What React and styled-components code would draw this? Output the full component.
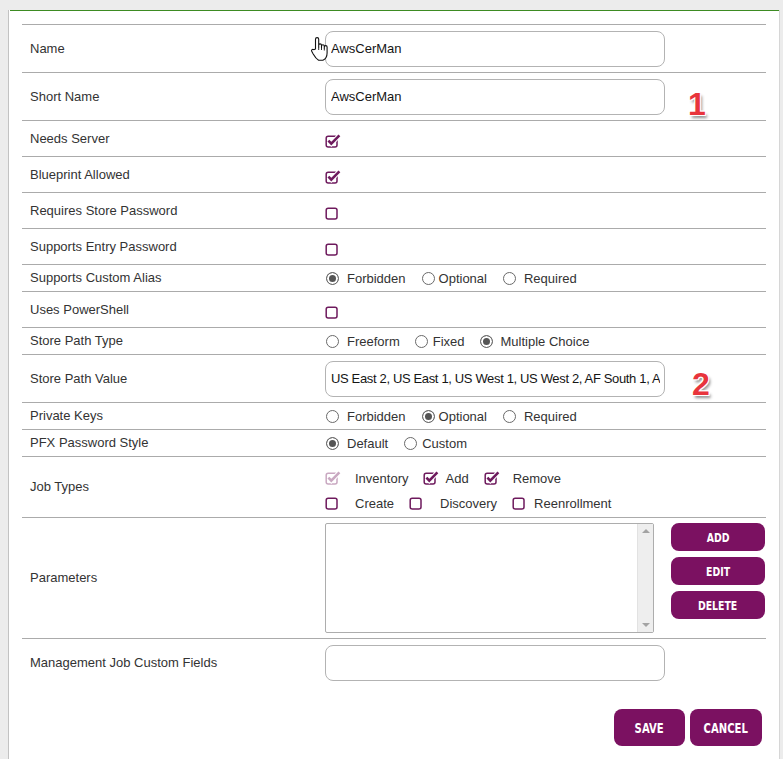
import React from 'react';
import styled, { createGlobalStyle } from 'styled-components';

const GlobalStyle = createGlobalStyle`
  html, body {
    margin: 0;
    padding: 0;
    background: #ececec;
  }
  body {
    font-family: "Liberation Sans", Arial, sans-serif;
    font-size: 13px;
    color: #333;
  }
`;

const Page = styled.div`
  box-sizing: border-box;
  min-height: 759px;
  padding: 9px 3px 0 8px;
`;

const Panel = styled.div`
  box-sizing: border-box;
  min-height: 750px;
  background: #fff;
  border-left: 1px solid #c2c2c2;
  border-right: 1px solid #d6d6d6;
  padding-bottom: 12px;
`;

const GreenLine = styled.div`
  height: 1px;
  margin: 1px 0 0 1px;
  background: #3d8b22;
`;

const Form = styled.div`
  width: 744px;
  margin: 13px 0 0 13px;
`;

const Row = styled.div`
  position: relative;
  display: grid;
  grid-template-columns: 303px 1fr;
  align-items: center;
  box-sizing: border-box;
  height: ${p => p.$h}px;
  border-top: 1px solid #ababab;
`;

const Label = styled.div`
  padding-left: 8px;
  margin-top: -1px;
  font-size: 13px;
  color: #333;
  white-space: nowrap;
`;

const Value = styled.div`
  display: flex;
  align-items: center;
  align-self: ${p => (p.$top ? 'start' : 'center')};
  padding-top: ${p => p.$pt || 0}px;
`;

const InputWrap = styled.div`
  position: relative;
`;

const TextInput = styled.input`
  box-sizing: border-box;
  width: 340px;
  height: 36px;
  padding: 0 4px 0 5px;
  border: 1px solid #b3b3b3;
  border-radius: 8px;
  background: #fff;
  font-family: "Liberation Sans", Arial, sans-serif;
  font-size: 13px;
  letter-spacing: ${p => (p.$tight ? '-0.35px' : 'normal')};
  color: #151515;
  outline: none;
`;

const Cursor = styled.svg`
  position: absolute;
  left: -15px;
  top: 5px;
`;

const Marker = styled.span`
  position: absolute;
  left: ${p => p.$left}px;
  top: ${p => p.$top}px;
  font-family: "Liberation Sans", Arial, sans-serif;
  font-weight: bold;
  font-size: 32px;
  line-height: 30px;
  color: #e8343c;
  text-shadow: -1px -1px 0 #fff, 1px -1px 0 #fff, -1px 1px 0 #fff, 1px 1px 0 #fff,
    2px 3px 3px rgba(0, 0, 0, 0.45);
`;

const CheckSvg = styled.svg`
  display: block;
  color: ${p => (p.$disabled ? '#c9a8c1' : '#6e1a5d')};
  margin-top: ${p => p.$mt || 0}px;
`;

const Options = styled.div`
  display: flex;
  align-items: center;
  gap: ${p => p.$gap}px;
`;

const Option = styled.label`
  display: inline-flex;
  align-items: center;
  height: 18px;
  font-size: 13px;
  color: #333;
  white-space: nowrap;
`;

const OptionText = styled.span`
  margin-left: ${p => p.$gap}px;
`;

const Radio = styled.span`
  box-sizing: border-box;
  display: block;
  width: 13px;
  height: 13px;
  margin-left: 1px;
  border-radius: 50%;
  border: 1px solid #6a6a6a;
  background: ${p => (p.$on ? '#555' : '#fff')};
  box-shadow: inset 0 0 0 2px #fff;
`;

const JobLines = styled.div`
  display: flex;
  flex-direction: column;
  gap: 7px;
`;

const ParamWrap = styled.div`
  display: flex;
  align-items: flex-start;
  gap: 17px;
`;

const ListBox = styled.div`
  box-sizing: border-box;
  width: 329px;
  height: 110px;
  display: flex;
  justify-content: flex-end;
  border: 1px solid #adadad;
  border-radius: 2px;
  background: #fff;
`;

const ScrollBar = styled.div`
  width: 16px;
  display: flex;
  flex-direction: column;
  justify-content: space-between;
  align-items: center;
  padding: 5px 0;
  box-sizing: border-box;
  background: #eeeeee;
  border-left: 1px solid #e2e2e2;
`;

const Arrow = styled.span`
  width: 0;
  height: 0;
  border-left: 4px solid transparent;
  border-right: 4px solid transparent;
  ${p => (p.$down ? 'border-top: 4px solid #a3a3a3;' : 'border-bottom: 4px solid #a3a3a3;')}
`;

const ButtonColumn = styled.div`
  display: flex;
  flex-direction: column;
  gap: 6px;
`;

const Button = styled.button`
  box-sizing: border-box;
  width: ${p => p.$w}px;
  height: ${p => p.$h}px;
  padding: 0;
  border: none;
  border-radius: 8px;
  background: #7b1161;
  color: #fff;
  font-family: "DejaVu Sans Condensed", "DejaVu Sans", sans-serif;
  font-weight: bold;
  font-size: ${p => p.$fs}px;
  cursor: pointer;
`;

/* the app's button face is a tall condensed type, narrowed here */
const ButtonText = styled.span`
  display: inline-block;
  transform: scaleX(0.8);
`;

const Footer = styled.div`
  display: flex;
  justify-content: flex-end;
  gap: 5px;
  margin-top: 23px;
  padding-right: 4px;
`;

const Check = ({ checked, disabled, mt }) => (
  <CheckSvg width="16" height="14" viewBox="0 0 16 14" $disabled={disabled} $mt={mt}>
    <rect x="1.2" y="2.2" width="10.8" height="10.8" rx="2" fill="none" stroke="currentColor" strokeWidth="1.5" />
    {checked && (
      <>
        <path d="M3.4 6.6 L6.3 9.6 L14.4 1.4" fill="none" stroke="#fff" strokeWidth="4.6" />
        <path d="M3.4 6.6 L6.3 9.6 L14.4 1.4" fill="none" stroke="currentColor" strokeWidth="2.6" />
      </>
    )}
  </CheckSvg>
);

const RadioGroup = ({ options, value, gap = 15 }) => (
  <Options $gap={gap}>
    {options.map(o => (
      <Option key={o.label}>
        <Radio $on={o.label === value} />
        <OptionText $gap={o.gap}>{o.label}</OptionText>
      </Option>
    ))}
  </Options>
);

const CheckLine = ({ items }) => (
  <Options $gap={15}>
    {items.map(i => (
      <Option key={i.label}>
        <Check checked={i.checked} disabled={i.disabled} />
        <OptionText $gap={i.gap}>{i.label}</OptionText>
      </Option>
    ))}
  </Options>
);

const HandCursor = () => (
  <Cursor width="19" height="26" viewBox="0 0 19 26">
    <path
      d="M5.5 13 V3.2 a1.6 1.6 0 0 1 3.2 0 V11 V9.3 a1.4 1.4 0 0 1 2.8 0 V11.5 V10.2 a1.4 1.4 0 0 1 2.8 0 V12 V11 a1.4 1.4 0 0 1 2.8 0 V17 c0 3.4 -1.6 6 -4.2 7.3 H8.6 c-2.2 -1.2 -3.8 -3.4 -5.4 -6.2 L1.7 15.3 a1.3 1.3 0 0 1 2 -1.6 Z"
      fill="#fff"
      stroke="#111"
      strokeWidth="1.1"
      strokeLinejoin="round"
    />
    <path d="M8.7 11 V14 M11.5 11.5 V14 M14.3 12 V14.5" stroke="#111" strokeWidth="0.9" />
  </Cursor>
);

const aliasOptions = [
  { label: 'Forbidden', gap: 8 },
  { label: 'Optional', gap: 4 },
  { label: 'Required', gap: 8 },
];

const pathOptions = [
  { label: 'Freeform', gap: 8 },
  { label: 'Fixed', gap: 5 },
  { label: 'Multiple Choice', gap: 8 },
];

const pfxOptions = [
  { label: 'Default', gap: 8 },
  { label: 'Custom', gap: 5 },
];

const jobLine1 = [
  { label: 'Inventory', checked: true, disabled: true, gap: 14 },
  { label: 'Add', checked: true, gap: 6 },
  { label: 'Remove', checked: true, gap: 13 },
];

const jobLine2 = [
  { label: 'Create', gap: 14 },
  { label: 'Discovery', gap: 15 },
  { label: 'Reenrollment', gap: 6 },
];

const storePaths =
  'US East 2, US East 1, US West 1, US West 2, AF South 1, AP East 1, AP South 1, AP Northeast 1';

export default function App() {
  return (
    <>
      <GlobalStyle />
      <Page>
        <Panel>
          <GreenLine />
          <Form>
            <Row $h={48}>
              <Label>Name</Label>
              <Value>
                <InputWrap>
                  <TextInput readOnly value="AwsCerMan" />
                  <HandCursor />
                </InputWrap>
              </Value>
            </Row>
            <Row $h={48}>
              <Label>Short Name</Label>
              <Value>
                <TextInput readOnly value="AwsCerMan" />
              </Value>
              <Marker $left={666} $top={16}>1</Marker>
            </Row>
            <Row $h={36}>
              <Label>Needs Server</Label>
              <Value><Check checked mt={4} /></Value>
            </Row>
            <Row $h={36}>
              <Label>Blueprint Allowed</Label>
              <Value><Check checked mt={4} /></Value>
            </Row>
            <Row $h={36}>
              <Label>Requires Store Password</Label>
              <Value><Check mt={5} /></Value>
            </Row>
            <Row $h={36}>
              <Label>Supports Entry Password</Label>
              <Value><Check mt={5} /></Value>
            </Row>
            <Row $h={27}>
              <Label>Supports Custom Alias</Label>
              <Value><RadioGroup options={aliasOptions} value="Forbidden" /></Value>
            </Row>
            <Row $h={36}>
              <Label>Uses PowerShell</Label>
              <Value><Check mt={5} /></Value>
            </Row>
            <Row $h={27}>
              <Label>Store Path Type</Label>
              <Value><RadioGroup options={pathOptions} value="Multiple Choice" gap={14} /></Value>
            </Row>
            <Row $h={48}>
              <Label>Store Path Value</Label>
              <Value>
                <TextInput readOnly $tight value={storePaths} />
              </Value>
              <Marker $left={670} $top={14}>2</Marker>
            </Row>
            <Row $h={27}>
              <Label>Private Keys</Label>
              <Value><RadioGroup options={aliasOptions} value="Optional" /></Value>
            </Row>
            <Row $h={27}>
              <Label>PFX Password Style</Label>
              <Value><RadioGroup options={pfxOptions} value="Default" /></Value>
            </Row>
            <Row $h={61}>
              <Label>Job Types</Label>
              <Value $top $pt={12}>
                <JobLines>
                  <CheckLine items={jobLine1} />
                  <CheckLine items={jobLine2} />
                </JobLines>
              </Value>
            </Row>
            <Row $h={121}>
              <Label>Parameters</Label>
              <Value>
                <ParamWrap>
                  <ListBox>
                    <ScrollBar>
                      <Arrow />
                      <Arrow $down />
                    </ScrollBar>
                  </ListBox>
                  <ButtonColumn>
                    <Button $w={94} $h={28} $fs={13}><ButtonText>ADD</ButtonText></Button>
                    <Button $w={94} $h={28} $fs={13}><ButtonText>EDIT</ButtonText></Button>
                    <Button $w={94} $h={28} $fs={13}><ButtonText>DELETE</ButtonText></Button>
                  </ButtonColumn>
                </ParamWrap>
              </Value>
            </Row>
            <Row $h={48}>
              <Label>Management Job Custom Fields</Label>
              <Value>
                <TextInput readOnly value="" />
              </Value>
            </Row>
            <Footer>
              <Button $w={71} $h={37} $fs={14}><ButtonText>SAVE</ButtonText></Button>
              <Button $w={72} $h={37} $fs={14}><ButtonText>CANCEL</ButtonText></Button>
            </Footer>
          </Form>
        </Panel>
      </Page>
    </>
  );
}
